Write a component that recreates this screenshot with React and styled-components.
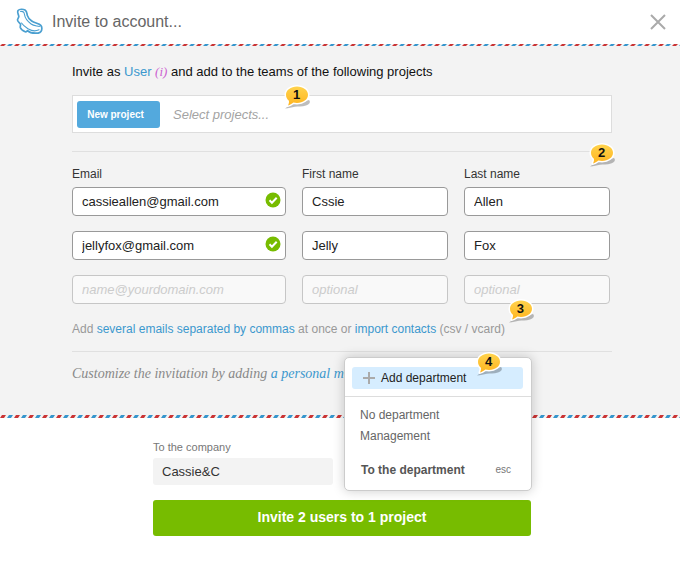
import { useState } from "react";
import styled, { createGlobalStyle } from "styled-components";

const GlobalStyle = createGlobalStyle`
  * {
    box-sizing: border-box;
  }
  body {
    margin: 0;
    background: #fff;
    color: #111;
    font-family: "Liberation Sans", Arial, sans-serif;
    font-size: 13px;
  }
  input, button {
    font-family: inherit;
  }
`;

const Header = styled.header`
  display: flex;
  align-items: center;
  height: 44px;
  padding: 0 14px 0 16px;
`;
const Title = styled.h1`
  flex: 1;
  margin: 0;
  padding-left: 8px;
  font-size: 16px;
  font-weight: 400;
  line-height: 20px;
  color: #666;
`;
const CloseButton = styled.button`
  display: flex;
  padding: 0;
  border: none;
  background: none;
  cursor: pointer;
`;

const StripeLine = styled.svg`
  display: block;
  width: 100%;
  height: ${(props) => props.$thickness}px;
  background: #f3f3f3;
`;

const Panel = styled.section`
  background: #f3f3f3;
  padding: 17px 68px 31px 72px;
`;
const PanelInner = styled.div`
  max-width: 540px;
  margin: 0 auto;
`;
const Intro = styled.p`
  margin: 0 0 14px;
  line-height: 18px;
`;
const Link = styled.a`
  color: #3b98ce;
  text-decoration: none;
`;
const InfoLink = styled.a`
  color: #cc5fd0;
  font-family: "Liberation Serif", serif;
  font-style: italic;
  text-decoration: none;
`;

const ProjectBox = styled.div`
  position: relative;
  display: flex;
  align-items: center;
  height: 38px;
  padding: 0 4px;
  border: 1px solid #ddd;
  background: #fff;
`;
const NewProjectButton = styled.button`
  width: 83px;
  height: 27px;
  padding: 0 6px 0 0;
  border: none;
  border-radius: 3px;
  background: #53a9dd;
  color: #fff;
  font-size: 10px;
  font-weight: 700;
  cursor: pointer;
`;
const ProjectInput = styled.input`
  flex: 1;
  min-width: 0;
  padding: 0 13px;
  border: none;
  outline: none;
  background: none;
  font-size: 13px;
  &::placeholder {
    color: #a3a3a3;
    font-style: italic;
    opacity: 1;
  }
`;

const Divider = styled.div`
  position: relative;
  height: 1px;
  margin-top: ${(props) => props.$space}px;
  background: #e0e0e0;
`;

const People = styled.div`
  display: grid;
  grid-template-columns: 214fr 146fr 146fr;
  column-gap: 16px;
  row-gap: 15px;
  padding: 14px 2px 0 0;
`;
const Field = styled.div`
  position: relative;
  min-width: 0;
`;
const FieldLabel = styled.label`
  display: block;
  margin-bottom: 5px;
  font-size: 12px;
  line-height: 16px;
  color: #333;
`;
const TextInput = styled.input`
  display: block;
  width: 100%;
  height: 29px;
  padding: 0 9px;
  border: 1px solid ${(props) => (props.$blank ? "#c6c6c6" : "#999")};
  border-radius: 4px;
  outline: none;
  background: ${(props) => (props.$blank ? "#f9f9f9" : "#fff")};
  color: #222;
  font-size: 13px;
  &::placeholder {
    color: #ccc;
    font-style: italic;
    opacity: 1;
  }
`;
const ValidMark = styled.svg`
  position: absolute;
  right: 5px;
  bottom: 8px;
`;

const ImportHint = styled.p`
  position: relative;
  width: fit-content;
  margin: 16px 0 0;
  font-size: 12px;
  line-height: 18px;
  color: #999;
`;
const Customize = styled.p`
  margin: 12px 0 0;
  font-family: "Liberation Serif", serif;
  font-size: 14px;
  font-style: italic;
  line-height: 20px;
  color: #888;
`;

const Marker = styled.span`
  position: absolute;
  top: ${(props) => props.$top}px;
  left: ${(props) => props.$left};
  z-index: 3;
  width: 27px;
  height: 26px;
  color: #111;
  font-size: 13px;
  font-weight: 700;
  line-height: 22px;
  text-align: center;
  padding-right: 2px;
`;
const MarkerShape = styled.svg`
  position: absolute;
  inset: 0;
  z-index: -1;
  overflow: visible;
`;

const Footer = styled.footer`
  padding: 22px 20px 20px 24px;
`;
const FooterInner = styled.div`
  max-width: 378px;
  margin: 0 auto;
`;
const Targets = styled.div`
  display: grid;
  grid-template-columns: 1fr 1fr;
  gap: 18px;
  margin-bottom: 15px;
`;
const TargetLabel = styled.label`
  display: block;
  margin-bottom: 3px;
  font-size: 11px;
  line-height: 15px;
  color: #777;
`;
const CompanyInput = styled.input`
  display: block;
  width: 100%;
  height: 27px;
  padding: 0 9px;
  border: none;
  border-radius: 3px;
  outline: none;
  background: #f3f3f3;
  color: #333;
  font-size: 13px;
`;
const Department = styled.div`
  position: relative;
`;
const Menu = styled.div`
  position: absolute;
  right: -1px;
  bottom: -6px;
  left: -7px;
  z-index: 2;
  height: 134px;
  border: 1px solid #ccc;
  border-radius: 5px;
  background: #fff;
  box-shadow: 0 0 12px rgba(0, 0, 0, 0.2);
`;
const MenuTop = styled.div`
  position: relative;
  padding: 9px 8px 7px 7px;
  border-bottom: 1px solid #ddd;
`;
const AddButton = styled.button`
  display: flex;
  align-items: center;
  gap: 5px;
  width: 100%;
  height: 22px;
  padding: 0 10px;
  border: none;
  border-radius: 3px;
  background: #d6edff;
  color: #222;
  font-size: 12px;
  cursor: pointer;
`;
const MenuList = styled.div`
  display: flex;
  flex-direction: column;
  padding: 7px 15px 0;
`;
const MenuItem = styled.button`
  height: 21px;
  padding: 0;
  border: none;
  background: none;
  color: #666;
  font-size: 12px;
  text-align: left;
  cursor: pointer;
`;
const MenuFoot = styled.div`
  display: flex;
  justify-content: space-between;
  align-items: center;
  padding: 15px 20px 0 16px;
  line-height: 18px;
  color: #555;
  font-size: 12px;
  font-weight: 700;
`;
const EscHint = styled.span`
  color: #777;
  font-size: 10px;
  font-weight: 400;
`;
const InviteButton = styled.button`
  display: block;
  width: 100%;
  height: 36px;
  padding: 0 0 2px;
  border: none;
  border-radius: 3px;
  background: #77bc00;
  color: #fff;
  font-size: 14px;
  font-weight: 700;
  cursor: pointer;
`;

const Logo = () => (
  <svg width="28" height="28" viewBox="0 0 28 28" fill="none" stroke="#4a9fd0" strokeLinejoin="round" strokeLinecap="round">
    <path strokeWidth="1.7" d="M2 2.500C3.500 1 7 .9 9 2c2.200 1.300 1.800 3.500 2.300 5.400.6 2.300 2.200 4 4.400 5.600 2.400 1.700 5.300 2 7.600 3.300 2.500 1.400 2.800 4 2.300 5.900-.6 2.200-3 3-5.600 3-3.200.1-6.200-.3-8.500-2.600-.7.600-1.200 1.600-2.300 1.200-2-.9-4.400-2.500-4.900-4.300-.3-1.200.4-2 .2-3.200C4.100 14.800 1.700 14 1.500 12c-.1-1.300 1.300-2 1.300-3.500C2.800 6.700.7 4.600 2 2.500z" />
    <path strokeWidth="1.100" d="M4.500 3.500c2.800-.4 3.700.7 4 3 .5 4 3.300 7 6.600 9.500 2.500 1.900 5.700 1.700 8.300 2.500M5.500 15c2 3 4.500 4.300 7 6 3 1.900 7 2.500 10.500.8" />
  </svg>
);

const Stripe = ({ id, thickness }) => (
  <StripeLine $thickness={thickness} aria-hidden="true">
    <defs>
      <pattern id={id} width="14" height={thickness} patternUnits="userSpaceOnUse">
        <path fill="#ca3434" d={`M2 0h4l-2 ${thickness}h-4z`} />
        <path fill="#3596cd" d={`M9 0h4l-2 ${thickness}h-4z`} />
      </pattern>
    </defs>
    <rect width="100%" height={thickness} fill={`url(#${id})`} />
  </StripeLine>
);

const Callout = ({ number, top, left }) => (
  <Marker $top={top} $left={left}>
    <MarkerShape width="27" height="26" viewBox="0 0 27 26" aria-hidden="true">
      <defs>
        <linearGradient id={`callout${number}`} x1="0" y1="0" x2="0" y2="1">
          <stop offset="0" stopColor="#ffd34d" />
          <stop offset="1" stopColor="#ffb520" />
        </linearGradient>
      </defs>
      <path fill="#000" opacity=".26" d="M1 24.500C5 22 8 19 13 18.500c4-.6 8-1.200 12-2.500 2 2 .5 4.500-3 5.500-4 1.200-8 .8-11 1.200-3.500.5-6 1.500-10 1.800z" />
      <path
        fill={`url(#callout${number})`}
        stroke="#fff"
        strokeWidth="3"
        strokeLinejoin="round"
        paintOrder="stroke"
        d="M13 2.500c6.200 0 11 3.600 11 8.300S19.200 19 13 19c-1.300 0-2.500-.1-3.600-.4C7.500 20 6 21 4 21.400c.8-1.500 1.200-3.200.9-4.700C3 15.200 2 13.100 2 10.800 2 6.100 6.800 2.500 13 2.500z"
      />
    </MarkerShape>
    {number}
  </Marker>
);

const people = [
  { email: "cassieallen@gmail.com", first: "Cssie", last: "Allen" },
  { email: "jellyfox@gmail.com", first: "Jelly", last: "Fox" },
  { email: "", first: "", last: "" },
];

const columns = [
  { key: "email", label: "Email", placeholder: "name@yourdomain.com" },
  { key: "first", label: "First name", placeholder: "optional" },
  { key: "last", label: "Last name", placeholder: "optional" },
];

const App = () => {
  const [rows, setRows] = useState(people);
  const [company, setCompany] = useState("Cassie&C");

  const handleChange = (index, key, value) => {
    setRows(rows.map((row, i) => (i === index ? { ...row, [key]: value } : row)));
  };

  return (
    <>
      <GlobalStyle />
      <Header>
        <Logo />
        <Title>Invite to account...</Title>
        <CloseButton aria-label="Close">
          <svg width="16" height="16" viewBox="0 0 16 16" stroke="#aaa" strokeWidth="2">
            <path d="M1 1l14 14M15 1L1 15" />
          </svg>
        </CloseButton>
      </Header>
      <Stripe id="stripe-top" thickness={2} />

      <Panel>
        <PanelInner>
          <Intro>
            Invite as <Link href="#role">User</Link> <InfoLink href="#info">(i)</InfoLink> and add to the teams of the following projects
          </Intro>
          <ProjectBox>
            <NewProjectButton>New project</NewProjectButton>
            <ProjectInput aria-label="Projects" placeholder="Select projects..." />
            <Callout number={1} top={-12} left="211px" />
          </ProjectBox>
          <Divider $space={18}>
            <Callout number={2} top={-9} left="calc(100% - 23px)" />
          </Divider>

          <People>
            {rows.map((row, index) =>
              columns.map((column) => (
                <Field key={column.key + index}>
                  {/* only the first row has visible labels */}
                  {index === 0 && <FieldLabel htmlFor={column.key + index}>{column.label}</FieldLabel>}
                  <TextInput
                    id={column.key + index}
                    aria-label={column.label}
                    placeholder={column.placeholder}
                    value={row[column.key]}
                    $blank={!row.email}
                    onChange={(e) => handleChange(index, column.key, e.target.value)}
                  />
                  {column.key === "email" && row.email && (
                    <ValidMark width="16" height="16" viewBox="0 0 16 16" aria-hidden="true">
                      <circle cx="8" cy="8" r="7.500" fill="#77bc00" />
                      <path d="M4.500 8.300l2.400 2.400 4.800-5" fill="none" stroke="#fff" strokeWidth="2" />
                    </ValidMark>
                  )}
                </Field>
              ))
            )}
          </People>

          <ImportHint>
            Add <Link href="#several">several emails separated by commas</Link> at once or{" "}
            <Link href="#import">import contacts</Link> (csv / vcard)
            <Callout number={3} top={-22} left="calc(100% + 3px)" />
          </ImportHint>
          <Divider $space={13} />
          <Customize>
            Customize the invitation by adding <Link href="#message">a personal m</Link>
          </Customize>
        </PanelInner>
      </Panel>
      <Stripe id="stripe-bottom" thickness={3} />

      <Footer>
        <FooterInner>
          <Targets>
            <div>
              <TargetLabel htmlFor="company">To the company</TargetLabel>
              <CompanyInput id="company" value={company} onChange={(e) => setCompany(e.target.value)} />
            </div>
            <Department>
              <Menu>
                <MenuTop>
                  <AddButton>
                    <svg width="14" height="14" viewBox="0 0 14 14" stroke="#aaa" strokeWidth="2">
                      <path d="M7 1v12M1 7h12" />
                    </svg>
                    Add department
                  </AddButton>
                  <Callout number={4} top={-7} left="131px" />
                </MenuTop>
                <MenuList>
                  <MenuItem>No department</MenuItem>
                  <MenuItem>Management</MenuItem>
                </MenuList>
                <MenuFoot>
                  To the department
                  <EscHint>esc</EscHint>
                </MenuFoot>
              </Menu>
            </Department>
          </Targets>
          <InviteButton>Invite 2 users to 1 project</InviteButton>
        </FooterInner>
      </Footer>
    </>
  );
};

export default App;
